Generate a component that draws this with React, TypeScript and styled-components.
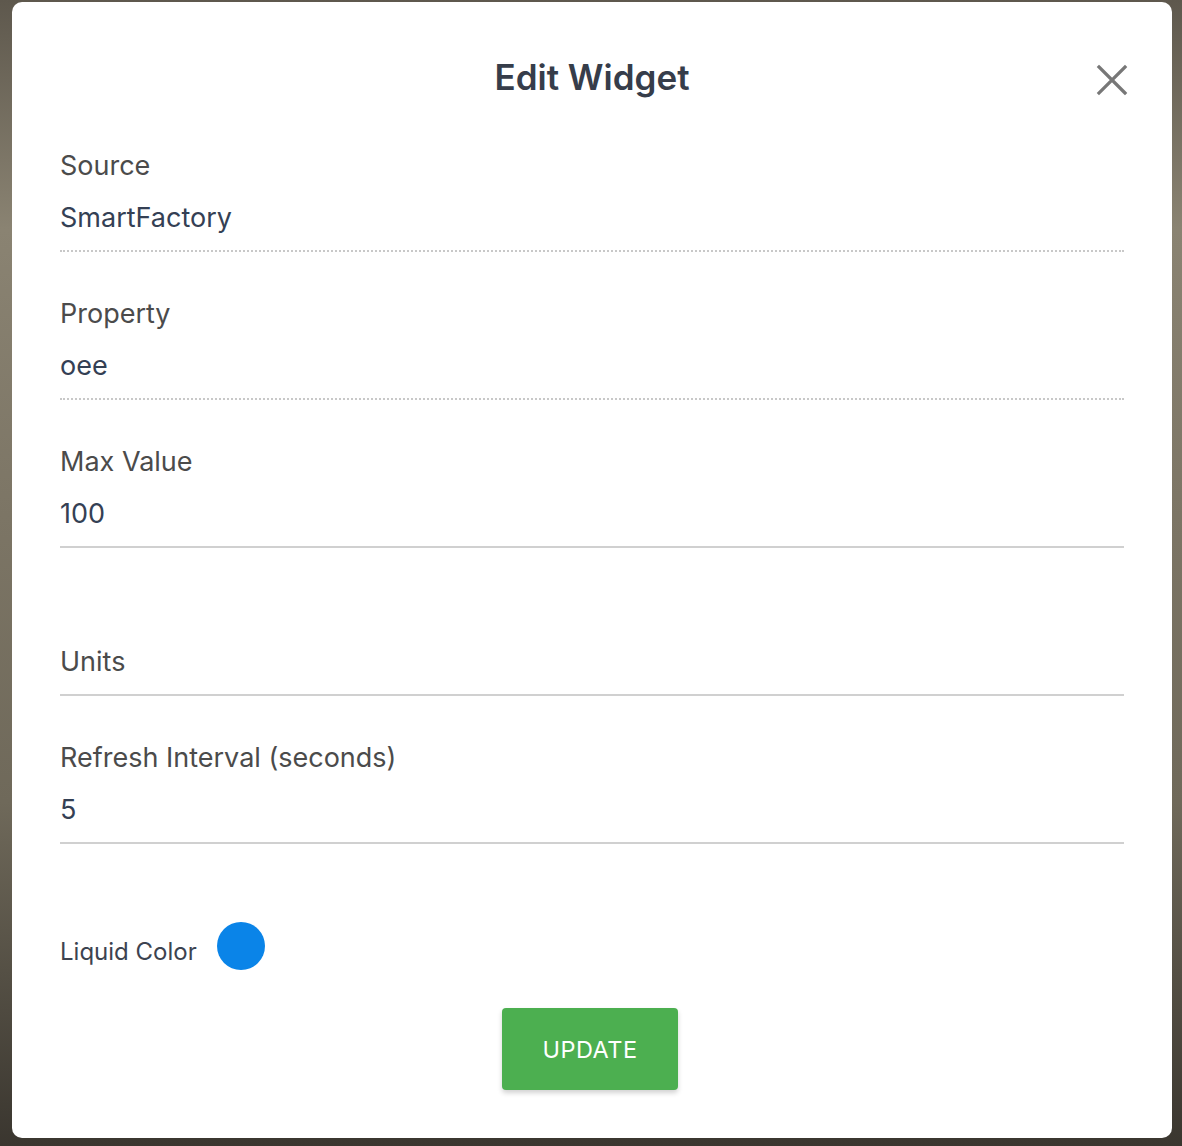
import { createGlobalStyle } from "styled-components";
import styled from "styled-components";

const GlobalStyle = createGlobalStyle`
  html, body {
    margin: 0;
    padding: 0;
  }
  body {
    background: linear-gradient(180deg, #5e584d 0%, #8a8372 20%, #7c7565 45%, #6f695a 70%, #3a362f 100%);
    font-family: "Inter", "Liberation Sans", sans-serif;
  }
`;

const Backdrop = styled.div`
  width: 1182px;
  height: 1146px;
  box-sizing: border-box;
  padding: 2px 10px 8px 12px;
  display: flex;
`;

const Modal = styled.div`
  flex: 1;
  background: #ffffff;
  border-radius: 10px;
  padding: 0 48px;
  display: flex;
  flex-direction: column;
  position: relative;
`;

const Header = styled.div`
  height: 148px;
  display: flex;
  justify-content: center;
  padding-top: 54px;
  box-sizing: border-box;
`;

const Title = styled.h2`
  margin: 0;
  font-size: 35px;
  font-weight: 600;
  color: #363d4a;
  line-height: 42px;
`;

const CloseButton = styled.button`
  position: absolute;
  top: 62px;
  right: 44px;
  width: 32px;
  height: 32px;
  padding: 0;
  border: none;
  background: transparent;
  cursor: pointer;
`;

const Field = styled.div<{ $empty?: boolean }>`
  display: flex;
  flex-direction: column;
  height: 148px;
  flex-shrink: 0;
  box-sizing: border-box;
  padding-top: ${({ $empty }) => ($empty ? "52px" : "0")};
`;

const Label = styled.label`
  font-size: 27px;
  line-height: 32px;
  color: #4b4b4b;
  height: 32px;
`;

const Value = styled.div<{ $dotted?: boolean }>`
  font-size: 27px;
  line-height: 32px;
  color: #344054;
  padding: 20px 0 16px 0;
  border-bottom: ${({ $dotted }) =>
    $dotted ? "2px dotted #c8c8c8" : "2px solid #d0d0d0"};
`;

const Placeholder = styled.div`
  font-size: 27px;
  line-height: 32px;
  color: #4b4b4b;
  padding: 0 0 16px 0;
  border-bottom: 2px solid #d0d0d0;
`;

const ColorRow = styled.div`
  display: flex;
  align-items: center;
  gap: 20px;
  margin-top: 30px;
  height: 52px;
`;

const ColorLabel = styled.span`
  font-size: 24px;
  color: #3c4350;
  padding-top: 10px;
`;

const Swatch = styled.div<{ $color: string }>`
  width: 48px;
  height: 48px;
  border-radius: 50%;
  background: ${({ $color }) => $color};
`;

const Footer = styled.div`
  display: flex;
  justify-content: center;
  margin-top: 36px;
`;

const UpdateButton = styled.button`
  width: 176px;
  height: 82px;
  margin-right: 4px;
  background: #4caf50;
  color: #ffffff;
  border: none;
  border-radius: 4px;
  font-family: "Inter", "Liberation Sans", sans-serif;
  font-size: 23.5px;
  letter-spacing: 0.5px;
  box-shadow: 0 3px 5px rgba(0, 0, 0, 0.18);
  cursor: pointer;
`;

const fields = [
  { label: "Source", value: "SmartFactory", dotted: true },
  { label: "Property", value: "oee", dotted: true },
  { label: "Max Value", value: "100", dotted: false },
];

export default function App() {
  return (
    <>
      <GlobalStyle />
      <Backdrop>
        <Modal>
          <Header>
            <Title>Edit Widget</Title>
          </Header>
          <CloseButton aria-label="close">
            <svg width="32" height="32" viewBox="0 0 32 32">
              <path
                d="M3 3 L29 29 M29 3 L3 29"
                stroke="#777777"
                strokeWidth="3.2"
                strokeLinecap="square"
              />
            </svg>
          </CloseButton>
          {fields.map((f) => (
            <Field key={f.label}>
              <Label>{f.label}</Label>
              <Value $dotted={f.dotted}>{f.value}</Value>
            </Field>
          ))}
          <Field $empty>
            <Placeholder>Units</Placeholder>
          </Field>
          <Field>
            <Label>Refresh Interval (seconds)</Label>
            <Value>5</Value>
          </Field>
          <ColorRow>
            <ColorLabel>Liquid Color</ColorLabel>
            <Swatch $color="#0a84e8" />
          </ColorRow>
          <Footer>
            <UpdateButton>UPDATE</UpdateButton>
          </Footer>
        </Modal>
      </Backdrop>
    </>
  );
}
